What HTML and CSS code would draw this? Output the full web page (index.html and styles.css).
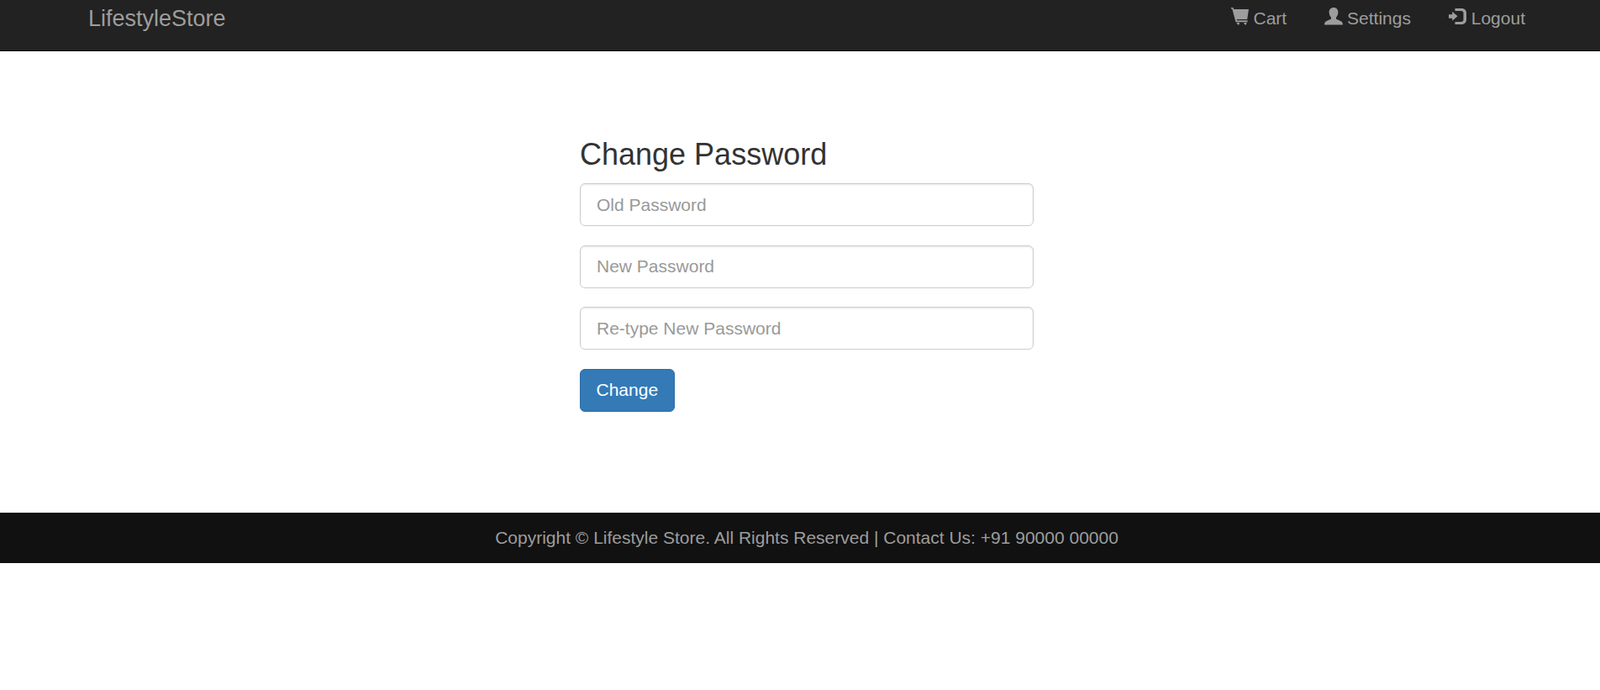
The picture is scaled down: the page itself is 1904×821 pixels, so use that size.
FILE: index.html
```html
<!DOCTYPE html>
<html lang="en">
<head>
  <meta charset="UTF-8" />
  <title>Lifestyle Store</title>
  <link rel="stylesheet" href="styles.css">
</head>
<body>
  <div class="page">
    <nav class="navbar">
      <div class="container navbar-inner">
        <a class="brand" href="#">LifestyleStore</a>
        <ul class="nav-links">
          <li>
            <a href="#">
              <svg class="icon" viewBox="0 0 21 21"><path d="M0 0h2.400l.9 2H21l-1.800 12H6.600l.4 1.300h12.500v2H5.500L1.300 1.500H0z"/><path d="M6.500 18h3.500l-.6 2.600H8zM15 18h3.500l-.6 2.600h-1.400z"/></svg>
              Cart
            </a>
          </li>
          <li>
            <a href="#">
              <svg class="icon" viewBox="0 0 21 21"><path d="M11 0c3.400 0 5.400 2.400 5.400 5.600 0 2.500-1 4.800-2.400 6.100v1.500c0 1 3.800 1.500 6.200 3.300 1.200.9 1.800 2.500 1.800 4.100H0c0-1.600.6-3.200 1.800-4.100C4.200 14.700 8 14.200 8 13.200v-1.500C6.600 10.400 5.600 8.100 5.600 5.600 5.600 2.400 7.600 0 11 0z"/></svg>
              Settings
            </a>
          </li>
          <li>
            <a href="#">
              <svg class="icon" viewBox="0 0 21 21"><path d="M0 8.300h4.200V4.800L10.500 10.300l-6.300 5.500V12.800H0z"/><path d="M7.500 1h8c3 0 5.500 2.200 5.500 5v8.500c0 3-2.500 5.500-5.500 5.500h-8v-3h7c2 0 3-1 3-2.500V6.500c0-1.500-1-2.500-3-2.500h-7z"/></svg>
              Logout
            </a>
          </li>
        </ul>
      </div>
    </nav>

    <div class="container content">
      <form class="password-form">
        <h3>Change Password</h3>
        <div class="form-group"><input type="password" placeholder="Old Password"></div>
        <div class="form-group"><input type="password" placeholder="New Password"></div>
        <div class="form-group"><input type="password" placeholder="Re-type New Password"></div>
        <button type="button" class="btn">Change</button>
      </form>
    </div>

    <footer class="footer">Copyright © Lifestyle Store. All Rights Reserved | Contact Us: +91 90000 00000</footer>
  </div>
</body>
</html>
```

FILE: styles.css
```css
* {
  margin: 0;
  padding: 0;
  box-sizing: border-box;
}
html, body {
  height: 100%;
  overflow: hidden;
  background: #fff;
}
body {
  font-family: "Liberation Sans", Arial, sans-serif;
  font-size: 21px;
  color: #333;
}
a {
  text-decoration: none;
  color: #9d9d9d;
}
.page {
  width: 1920px;
}
.container {
  width: 1755px;
  margin: 0 auto;
  padding: 0 22.5px;
}
.navbar {
  height: 61px;
  background: #222;
  border-bottom: 1.5px solid #080808;
}
.navbar-inner {
  display: flex;
  justify-content: space-between;
}
.brand {
  font-size: 27px;
  line-height: 30px;
  padding-top: 7px;
}
.nav-links {
  display: flex;
  gap: 45px;
  list-style: none;
  line-height: 30px;
  padding-top: 7px;
}
.icon {
  width: 21px;
  height: 21px;
  fill: #9d9d9d;
  vertical-align: -1px;
  overflow: visible;
}
.content {
  padding-top: 103px;
  padding-bottom: 120.5px;
}
.password-form {
  width: 540px;
  margin: 0 auto;
}
h3 {
  font-size: 36px;
  font-weight: 500;
  line-height: 1.1;
  margin-bottom: 14.5px;
}
.form-group {
  margin-bottom: 22.5px;
}
input {
  display: block;
  width: 100%;
  height: 51px;
  padding: 9px 19px;
  font: inherit;
  color: #555;
  background: #fff;
  border: 1.5px solid #ccc;
  border-radius: 6px;
  box-shadow: inset 0 1.5px 1.5px rgba(0,0,0,0.075);
}
input::placeholder {
  color: #999;
}
.btn {
  display: block;
  height: 51px;
  padding: 9px 18.5px;
  font: inherit;
  color: #fff;
  background: #337ab7;
  border: 1.5px solid #2e6da4;
  border-radius: 6px;
}
.footer {
  height: 60px;
  line-height: 60px;
  text-align: center;
  color: #9d9d9d;
  background: #111;
}
```
